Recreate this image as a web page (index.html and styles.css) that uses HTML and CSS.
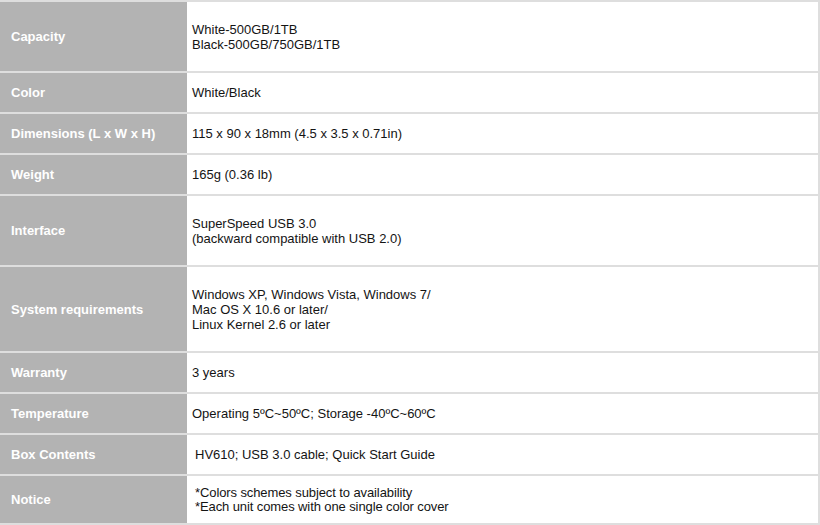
FILE: index.html
```html
<!DOCTYPE html>
<html>
<head>
<meta charset="utf-8">
<link rel="stylesheet" href="styles.css">
</head>
<body>
<table class="spec">
  <tr class="h69"><th>Capacity</th><td>White-500GB/1TB<br>Black-500GB/750GB/1TB</td></tr>
  <tr class="h39"><th>Color</th><td>White/Black</td></tr>
  <tr class="h39"><th>Dimensions (L x W x H)</th><td>115 x 90 x 18mm (4.5 x 3.5 x 0.71in)</td></tr>
  <tr class="h39"><th>Weight</th><td>165g (0.36 lb)</td></tr>
  <tr class="h69"><th>Interface</th><td>SuperSpeed USB 3.0<br>(backward compatible with USB 2.0)</td></tr>
  <tr class="h84"><th>System requirements</th><td>Windows XP, Windows Vista, Windows 7/<br>Mac OS X 10.6 or later/<br>Linux Kernel 2.6 or later</td></tr>
  <tr class="h39"><th>Warranty</th><td>3 years</td></tr>
  <tr class="h39"><th>Temperature</th><td>Operating 5ºC~50ºC; Storage -40ºC~60ºC</td></tr>
  <tr class="h39"><th>Box Contents</th><td class="indent">HV610; USB 3.0 cable; Quick Start Guide</td></tr>
  <tr class="h47"><th>Notice</th><td class="indent notice">*Colors schemes subject to availability<br>*Each unit comes with one single color cover</td></tr>
</table>
</body>
</html>
```

FILE: styles.css
```css
html, body {
  margin: 0;
  padding: 0;
  background: #ffffff;
}
.spec {
  width: 820px;
  border-collapse: separate;
  border-spacing: 0 2px;
  background: #dedede;
  font-family: "Liberation Sans", Arial, sans-serif;
  margin-top: -2px;
  padding-top: 2px;
}
.spec th {
  width: 176px;
  background: #b3b3b3;
  color: #ffffff;
  font-size: 13px;
  font-weight: bold;
  text-align: left;
  padding: 0 0 0 11px;
  vertical-align: middle;
}
.spec td {
  background: #ffffff;
  color: #141414;
  font-size: 13px;
  line-height: 15px;
  padding: 0 0 0 5px;
  vertical-align: middle;
  border-right: 2px solid #dedede;
}
.spec td.indent {
  padding-left: 8px;
}
.spec td.notice {
  line-height: 14px;
  letter-spacing: -0.1px;
}
.h69 { height: 69px; }
.h39 { height: 39px; }
.h84 { height: 84px; }
.h47 { height: 47px; }
```
